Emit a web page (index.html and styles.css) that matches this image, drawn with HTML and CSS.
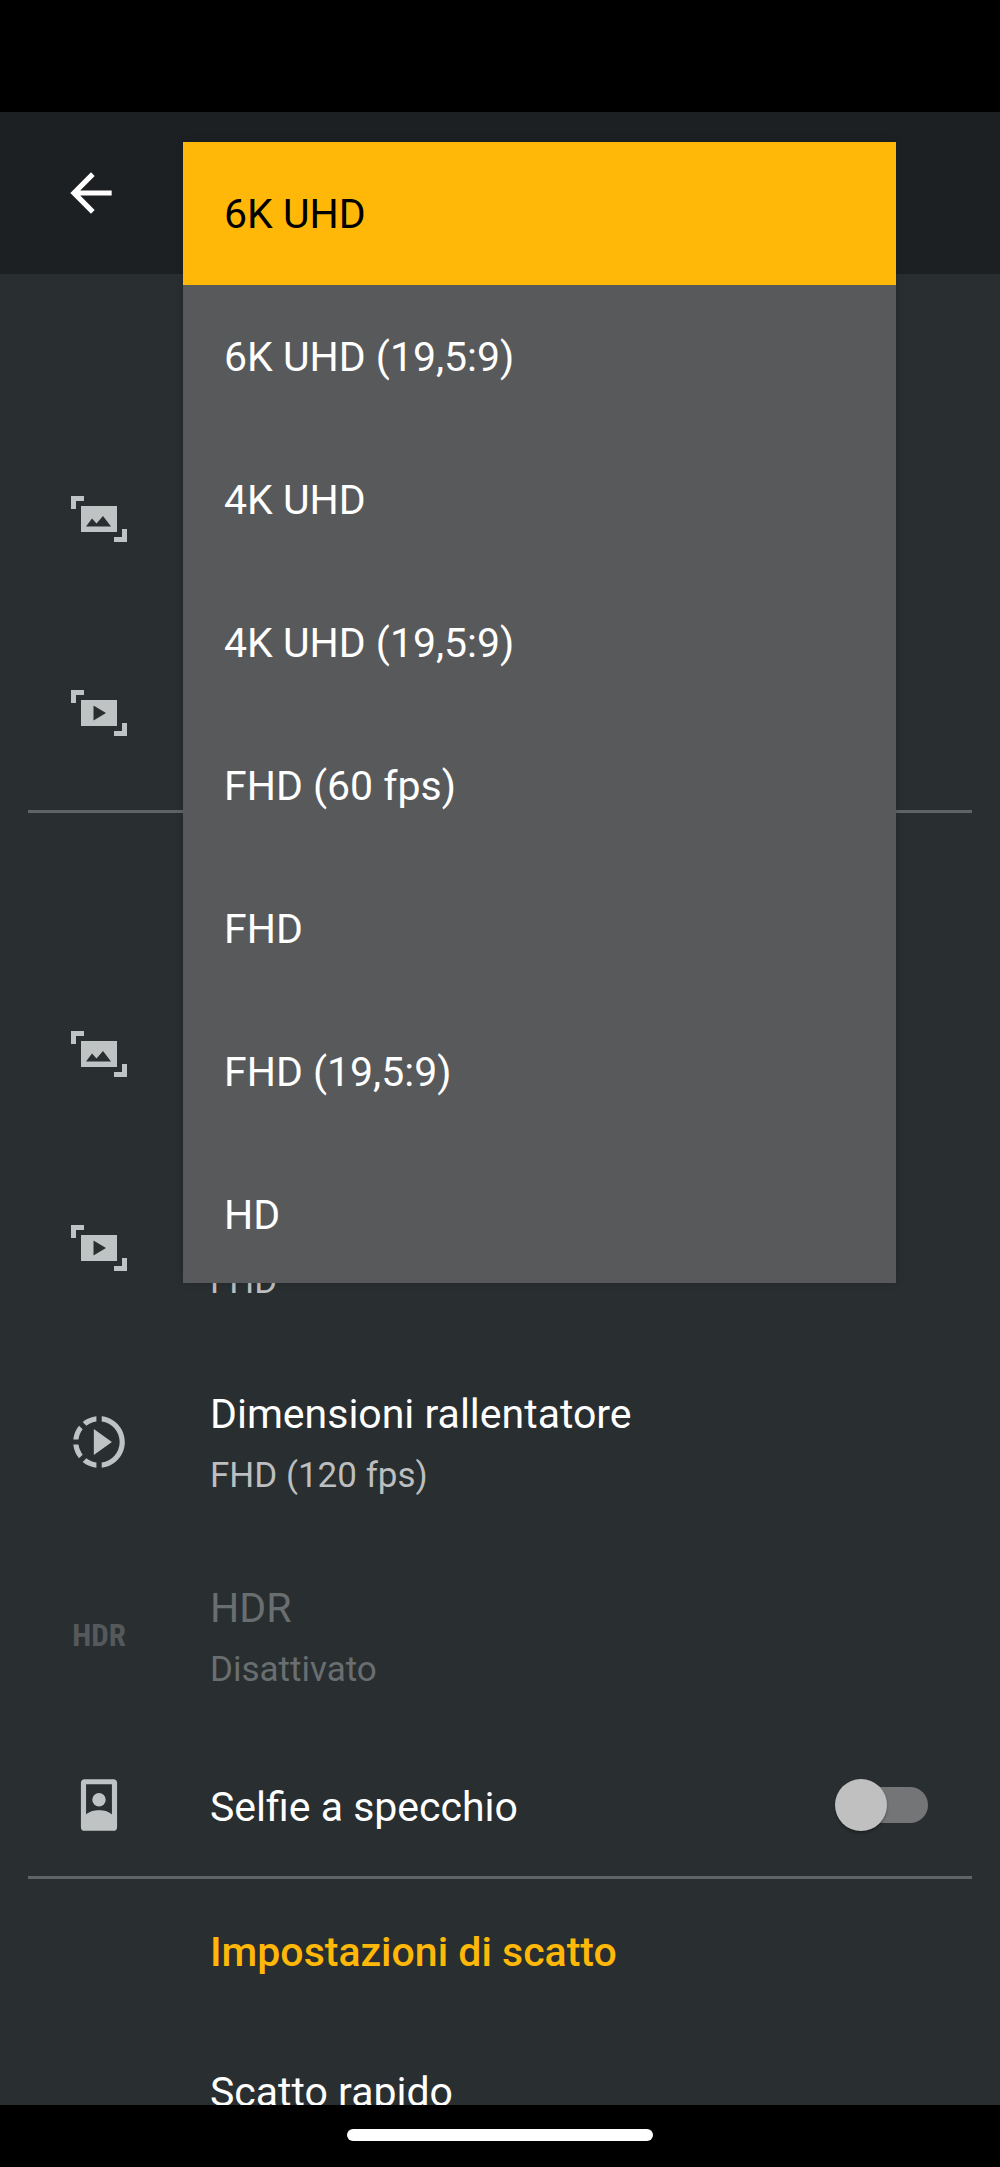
FILE: index.html
```html
<!DOCTYPE html>
<html lang="it">
<head>
    <meta charset="UTF-8">
    <meta name="viewport" content="width=device-width, initial-scale=1.0">
    <title>Impostazioni fotocamera</title>
    <link rel="stylesheet" href="styles.css">
</head>
<body>
    <svg class="icon-defs" aria-hidden="true">
        <symbol id="icon-photo" viewBox="0 0 62 62">
            <path d="M3 8h13v5H8v8H3zM46 49h8v-8h5v13H46z"/>
            <path fill-rule="evenodd" d="M13 18h36v26H13zM18 38.500h25L35 28l-6.500 7.500-4.500-5z"/>
        </symbol>
        <symbol id="icon-video" viewBox="0 0 62 62">
            <path d="M3 8h13v5H8v8H3zM46 49h8v-8h5v13H46z"/>
            <path fill-rule="evenodd" d="M13 18h36v26H13zM25.500 23.500v15L38 31z"/>
        </symbol>
    </svg>

    <div class="status-bar"></div>
    <header class="toolbar">
        <button class="back-button" aria-label="Indietro">
            <svg class="icon" viewBox="0 0 24 24"><path d="M20 11H7.830l5.590-5.590L12 4l-8 8 8 8 1.410-1.410L7.830 13H20v-2z"/></svg>
        </button>
    </header>

    <main class="settings">
        <section class="section">
            <h2 class="section-header"></h2>
            <div class="row">
                <svg class="icon"><use href="#icon-photo"/></svg>
            </div>
            <div class="row">
                <svg class="icon"><use href="#icon-video"/></svg>
            </div>
        </section>
        <section class="section">
            <h2 class="section-header"></h2>
            <div class="row">
                <svg class="icon"><use href="#icon-photo"/></svg>
            </div>
            <div class="row">
                <svg class="icon"><use href="#icon-video"/></svg>
                <div class="row-text">
                    <div class="row-title"></div>
                    <div class="row-summary">FHD</div>
                </div>
            </div>
            <div class="row">
                <svg class="icon" viewBox="0 0 24 24"><path d="M10 7v10l7-5zM11 4.070V2.050c-2.010.2-3.840 1-5.320 2.210L7.100 5.690c1.110-.86 2.440-1.440 3.900-1.620zM5.690 7.100L4.260 5.680C3.050 7.160 2.250 8.990 2.050 11h2.020c.18-1.460.76-2.790 1.620-3.900zM4.070 13H2.050c.2 2.010 1 3.840 2.210 5.320l1.430-1.430c-.86-1.100-1.440-2.430-1.620-3.890zm1.610 6.740C7.160 20.950 9 21.750 11 21.950v-2.020c-1.460-.18-2.790-.76-3.900-1.620l-1.420 1.430zM22 12c0 5.160-3.920 9.420-8.950 9.950v-2.020C16.970 19.410 20 16.050 20 12s-3.030-7.410-6.950-7.930V2.050C18.080 2.580 22 6.840 22 12z"/></svg>
                <div class="row-text">
                    <div class="row-title">Dimensioni rallentatore</div>
                    <div class="row-summary">FHD (120 fps)</div>
                </div>
            </div>
            <div class="row disabled">
                <span class="icon icon-hdr">HDR</span>
                <div class="row-text">
                    <div class="row-title">HDR</div>
                    <div class="row-summary">Disattivato</div>
                </div>
            </div>
            <div class="row single">
                <svg class="icon" viewBox="0 0 24 24"><path fill-rule="evenodd" d="M6.500 2h11A1.500 1.500 0 0 1 19 3.500v17a1.500 1.500 0 0 1-1.500 1.500h-11A1.500 1.500 0 0 1 5 20.500v-17A1.500 1.500 0 0 1 6.500 2zM7 4v11.700c2-2.200 8-2.200 10 0V4z"/><circle cx="12" cy="10" r="2.600"/></svg>
                <label class="row-title" for="mirrorSelfie">Selfie a specchio</label>
                <input class="switch" type="checkbox" role="switch" id="mirrorSelfie">
            </div>
        </section>
        <section class="section">
            <h2 class="section-header">Impostazioni di scatto</h2>
            <div class="row">
                <span class="icon"></span>
                <div class="row-text">
                    <div class="row-title">Scatto rapido</div>
                    <div class="row-summary"></div>
                </div>
            </div>
        </section>
    </main>

    <footer class="nav-bar">
        <div class="nav-handle"></div>
    </footer>

    <select class="size-menu" size="8" aria-label="Dimensioni video">
        <option selected>6K UHD</option>
        <option>6K UHD (19,5:9)</option>
        <option>4K UHD</option>
        <option>4K UHD (19,5:9)</option>
        <option>FHD (60 fps)</option>
        <option>FHD</option>
        <option>FHD (19,5:9)</option>
        <option>HD</option>
    </select>
</body>
</html>
```

FILE: styles.css
```css
* {
    box-sizing: border-box;
}
body {
    position: relative;
    display: flex;
    flex-direction: column;
    height: 100vh;
    margin: 0;
    background-color: #292e30;
    color: #fff;
    font-family: Roboto, sans-serif;
    font-size: 41px;
    line-height: 52px;
    overflow: hidden;
}
.icon-defs {
    position: absolute;
    width: 0;
    height: 0;
}
.status-bar {
    flex: none;
    height: 112px;
    background-color: #000;
}
.toolbar {
    flex: none;
    display: flex;
    align-items: center;
    height: 162px;
    padding: 0 60px;
    background-color: #1d2022;
}
.back-button {
    display: flex;
    padding: 0;
    border: none;
    background: none;
    color: #fff;
    cursor: pointer;
}
.back-button .icon {
    color: #fff;
}
.settings {
    flex: 1;
    min-height: 0;
    padding-top: 4px;
    overflow: hidden;
}
.section + .section::before {
    content: "";
    display: block;
    height: 3px;
    margin: 0 28px;
    background-color: #5f6467;
}
.section-header {
    display: flex;
    align-items: center;
    height: 144px;
    margin: 0;
    padding: 2px 0 0 210px;
    color: #ffb808;
    font-size: 41px;
    font-weight: 500;
}
.row {
    display: flex;
    align-items: center;
    gap: 80px;
    height: 194px;
    padding: 0 72px 0 68px;
}
.row.single {
    height: 143px;
}
.icon {
    flex: none;
    width: 62px;
    height: 62px;
    color: #c0c3c3;
    fill: currentColor;
}
.icon-hdr {
    display: flex;
    align-items: center;
    justify-content: center;
    font-family: "Roboto Condensed", "Liberation Sans Narrow", Roboto, sans-serif;
    font-size: 31px;
    font-weight: 700;
}
.row-text {
    display: flex;
    flex-direction: column;
    gap: 14px;
    padding-top: 2px;
}
.row-title {
    min-height: 52px;
}
.row.single .row-title {
    padding-top: 4px;
}
.row-summary {
    min-height: 44px;
    color: #bcbebf;
    font-size: 35px;
    line-height: 44px;
}
.disabled .row-title,
.disabled .row-summary {
    color: #696e70;
}
.disabled .icon {
    color: #55595b;
}

/* switch */
.switch {
    appearance: none;
    display: flex;
    align-items: center;
    width: 86px;
    height: 36px;
    margin: 0 0 0 auto;
    border-radius: 18px;
    background-color: #747577;
    cursor: pointer;
}
.switch::before {
    content: "";
    width: 52px;
    height: 52px;
    margin-left: -7px;
    flex: none;
    border-radius: 50%;
    background-color: #c0c0c0;
    box-shadow: 0 2px 3px rgba(0, 0, 0, 0.3);
}
.switch:checked {
    justify-content: flex-end;
}

/* popup with the video sizes */
.size-menu {
    position: absolute;
    top: 142px;
    left: 183px;
    right: 104px;
    height: 1141px;
    padding: 0;
    border: none;
    border-radius: 0;
    outline: none;
    background-color: #58595b;
    color: #fff;
    font: inherit;
    overflow: hidden;
    box-shadow: 0 0 8px rgba(0, 0, 0, 0.15);
}
.size-menu option {
    height: 143px;
    padding: 48px 41px 0;
    font-size: 41px;
    line-height: 52px;
}
.size-menu option:checked {
    background: #ffb808 linear-gradient(#ffb808, #ffb808);
    color: #000;
}

.nav-bar {
    flex: none;
    display: flex;
    align-items: center;
    justify-content: center;
    height: 62px;
    padding-bottom: 2px;
    background-color: #000;
}
.nav-handle {
    width: 306px;
    height: 12px;
    border-radius: 6px;
    background-color: #fff;
}
```
